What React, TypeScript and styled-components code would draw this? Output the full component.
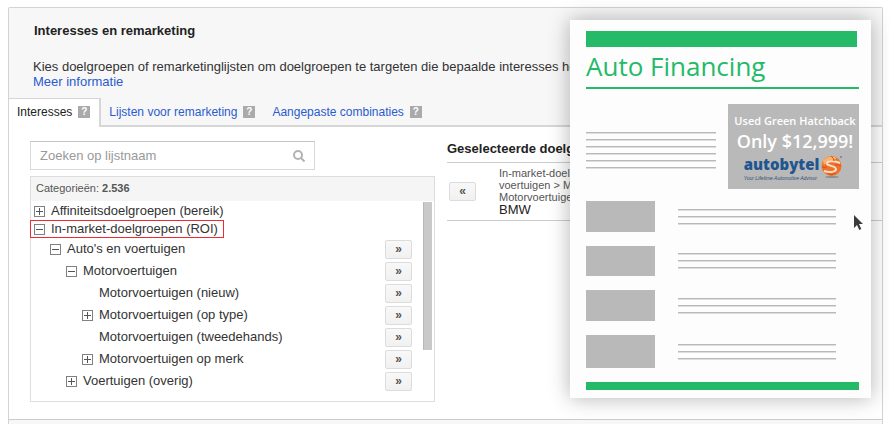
import React from "react";
import styled, { createGlobalStyle } from "styled-components";

const GlobalStyle = createGlobalStyle`
  * { box-sizing: border-box; }
  body {
    margin: 0;
    background: #fff;
    color: #333;
    font-family: "Liberation Sans", Arial, sans-serif;
    font-size: 13px;
    line-height: 16px;
  }
  button, input { font-family: inherit; }
  h2, h3, p, ul { margin: 0; padding: 0; }
  ul { list-style: none; }
`;

const Page = styled.main`
  position: relative;
  padding: 7px 6px 0 8px;
  overflow: hidden;
`;

const Panel = styled.section`
  border: 1px solid #d3d3d3;
  border-bottom-color: #ccc;
  border-radius: 2px 2px 0 0;
  background: #fff;
`;

const NextPanel = styled.div`
  height: 5px;
  border: solid #d3d3d3;
  border-width: 0 1px;
  background: #f7f7f7;
`;

const Header = styled.header`
  padding: 15px 0 0;
  background: #f7f7f7;
`;

const Title = styled.h2`
  padding: 0 25px;
  color: #222;
  font-size: 13px;
  line-height: 16px;
`;

const Intro = styled.p`
  padding: 20px 0 9px 24px;
  line-height: 15px;
  white-space: nowrap;
  overflow: hidden;
`;

const Link = styled.a`
  color: #2a5bd0;
  text-decoration: none;
`;

const Tabs = styled.div`
  display: flex;
  height: 29px;
`;

const TabCell = styled.div<{ $active?: boolean }>`
  display: flex;
  align-items: center;
  gap: 6px;
  padding: 0 9px ${(p) => (p.$active ? 2 : 0)}px 8px;
  border: solid #d6d6d6;
  border-width: ${(p) => (p.$active ? "1px 2px 0 0" : "0 0 2px")};
  background: ${(p) => (p.$active ? "#fff" : "transparent")};
`;

const TabButton = styled.button<{ $active?: boolean }>`
  padding: 0;
  border: 0;
  background: none;
  color: ${(p) => (p.$active ? "#222" : "#2a5bd0")};
  font-size: 12px;
  line-height: 16px;
  white-space: nowrap;
`;

const TabRule = styled.div`
  flex: 1;
  border-bottom: 2px solid #d6d6d6;
`;

const Help = styled.button`
  width: 12px;
  height: 12px;
  padding: 0;
  border: 0;
  background: #aaa;
  color: #fff;
  font-size: 10px;
  font-weight: bold;
  line-height: 12px;
`;

const Content = styled.div`
  display: flex;
  align-items: flex-start;
  gap: 12px;
  padding: 14px 0 17px 21px;
`;

const Browser = styled.div`
  flex: none;
  width: 405px;
`;

const SearchBox = styled.label`
  display: flex;
  align-items: center;
  width: 285px;
  height: 29px;
  padding: 0 9px;
  border: 1px solid #d9d9d9;
  border-top-color: #c4c4c4;
`;

const SearchInput = styled.input`
  flex: 1;
  min-width: 0;
  padding: 0;
  border: 0;
  outline: 0;
  font-size: 13px;
  &::placeholder { color: #999; opacity: 1; }
`;

const TreeBox = styled.div`
  margin-top: 6px;
  border: 1px solid #ddd;
`;

const Count = styled.div`
  height: 24px;
  padding-left: 5px;
  background: #f5f5f5;
  color: #555;
  font-size: 11px;
  line-height: 23px;
`;

const TreeBody = styled.div`
  display: flex;
  padding: 1px 2px 9px 0;
`;

const Tree = styled.ul`
  flex: 1;
`;

const Thumb = styled.div`
  width: 9px;
  height: 148px;
  border-left: 1px solid #b8b8b8;
  background: #c9c9c9;
`;

const Row = styled.li<{ $level: number }>`
  display: flex;
  align-items: center;
  justify-content: space-between;
  height: ${(p) => (p.$level ? 22 : 18)}px;
  padding: 0 11px 0 ${(p) => p.$level * 16}px;
`;

const Node = styled.span<{ $marked?: boolean }>`
  display: flex;
  align-items: center;
  gap: 6px;
  height: 18px;
  padding: 0 5px 0 3px;
  border: 1px solid ${(p) => (p.$marked ? "#ee2b34" : "transparent")};
  margin-left: -1px;
  white-space: nowrap;
`;

const Toggle = styled.button`
  display: block;
  width: 11px;
  height: 11px;
  padding: 0;
  border: 0;
  background: none;
  svg { display: block; }
`;

const Blank = styled.span`
  width: 11px;
`;

const MoveButton = styled.button`
  width: 27px;
  height: 19px;
  padding: 0;
  border: 1px solid #dcdcdc;
  border-radius: 2px;
  background: linear-gradient(#f8f8f8, #f1f1f1);
  color: #555;
  font-size: 12px;
  font-weight: bold;
  line-height: 15px;
`;

const Selected = styled.div`
  flex: 1;
  min-width: 0;
`;

const SelectedTitle = styled.h3`
  padding-bottom: 6px;
  border-bottom: 1px solid #ccc;
  color: #222;
  font-size: 13px;
  line-height: 15px;
`;

const SelectedItem = styled.div`
  display: flex;
  align-items: center;
  gap: 23px;
  height: 58px;
  padding-left: 2px;
  border-bottom: 1px solid #ccc;
`;

const Path = styled.div`
  width: 176px;
  color: #555;
  font-size: 11px;
  line-height: 12px;
`;

const Leaf = styled.div`
  color: #222;
  font-size: 13px;
  line-height: 14px;
`;

const Preview = styled.aside`
  position: absolute;
  top: 20px;
  right: 18px;
  width: 301px;
  height: 378px;
  padding: 11px 12px 0 16px;
  background: #fdfdfd;
  box-shadow: 0 0 20px rgba(0, 0, 0, 0.3);
  font-family: "Open Sans", sans-serif;
`;

const Bar = styled.div<{ $h: number; $inset?: number }>`
  height: ${(p) => p.$h}px;
  margin-right: ${(p) => p.$inset ?? 0}px;
  background: #24ba68;
`;

const PreviewTitle = styled.h2`
  height: 40px;
  color: #24ba68;
  font-size: 26px;
  font-weight: 400;
  line-height: 38px;
  white-space: nowrap;
`;

const TopRow = styled.div`
  display: flex;
  justify-content: space-between;
  margin: 15px 0 12px;
`;

const Lines = styled.div<{ $w: number; $top?: number }>`
  display: grid;
  align-content: center;
  gap: 5px;
  width: ${(p) => p.$w}px;
  padding-top: ${(p) => p.$top ?? 0}px;
`;

const Line = styled.div`
  height: 2px;
  border-top: 1px solid #b9b9b9;
  background: #dedede;
`;

const Ad = styled.div`
  display: flex;
  flex-direction: column;
  align-items: center;
  width: 131px;
  height: 85px;
  padding-top: 9px;
  background: #b9b9b9;
  color: #fff;
  font-weight: 600;
  white-space: nowrap;
`;

const AdLine = styled.div<{ $size: number; $lh: number }>`
  padding-left: 3px;
  font-size: ${(p) => p.$size}px;
  line-height: ${(p) => p.$lh}px;
`;

const Brand = styled.div`
  display: flex;
  align-items: center;
  gap: 2px;
  color: #1f568f;
  svg { display: block; }
`;

const BrandName = styled.div`
  font-size: 15px;
  font-weight: 800;
  line-height: 22px;
`;

const Tagline = styled.div`
  color: #2f4d73;
  font-family: "Liberation Sans", sans-serif;
  font-size: 5px;
  font-style: italic;
  font-weight: 400;
  line-height: 6px;
`;

const Articles = styled.div`
  display: grid;
  gap: 14px;
  padding-bottom: 14px;
`;

const Article = styled.div`
  display: flex;
  gap: 23px;
`;

const Picture = styled.div<{ $h: number }>`
  width: 69px;
  height: ${(p) => p.$h}px;
  background: #b9b9b9;
`;

const Pointer = styled.svg`
  position: absolute;
  top: 194px;
  right: 8px;
`;

type TreeNode = {
  label: string;
  level: number;
  state?: "open" | "closed";
  marked?: boolean;
};

const nodes: TreeNode[] = [
  { label: "Affiniteitsdoelgroepen (bereik)", level: 0, state: "closed" },
  { label: "In-market-doelgroepen (ROI)", level: 0, state: "open", marked: true },
  { label: "Auto's en voertuigen", level: 1, state: "open" },
  { label: "Motorvoertuigen", level: 2, state: "open" },
  { label: "Motorvoertuigen (nieuw)", level: 3 },
  { label: "Motorvoertuigen (op type)", level: 3, state: "closed" },
  { label: "Motorvoertuigen (tweedehands)", level: 3 },
  { label: "Motorvoertuigen op merk", level: 3, state: "closed" },
  { label: "Voertuigen (overig)", level: 2, state: "closed" },
];

const tabs = ["Interesses", "Lijsten voor remarketing", "Aangepaste combinaties"];

const pictureHeights = [31, 30, 31, 33];

function ToggleIcon({ open }: { open: boolean }) {
  return (
    <svg width="11" height="11" viewBox="0 0 11 11" fill="none" stroke="#808080">
      <rect x="0.5" y="0.5" width="10" height="10" />
      <path d={open ? "M2 5.5h7" : "M2 5.5h7M5.5 2v7"} stroke="#555" />
    </svg>
  );
}

function SkeletonLines({ count, width, top }: { count: number; width: number; top?: number }) {
  return (
    <Lines $w={width} $top={top}>
      {Array.from({ length: count }, (_, i) => (
        <Line key={i} />
      ))}
    </Lines>
  );
}

function Globe() {
  return (
    <svg width="22" height="24" viewBox="0 0 22 24">
      <ellipse cx="11" cy="22" rx="7" ry="1" fill="#8d8d8d" />
      <circle cx="10.5" cy="11" r="10" fill="#ee7328" />
      <path d="M2 6Q6 0 14 2Q17 4 12 5Q6 6 3 10Z" fill="#f9b26b" />
      <path d="M19 8C13 5 5 6 6 9c1 2 9 2 9 5 0 3-6 4-12 2" fill="none" stroke="#f6ddca" strokeWidth="2" />
      <path d="M1 12Q4 13 6 12M14 10Q17 9 20 11M10 1Q13 3 13 6M7 19Q11 21 15 18" fill="none" stroke="#d65218" />
      <circle cx="20" cy="2" r="1" fill="#69819b" />
    </svg>
  );
}

export default function App() {
  return (
    <Page>
      <GlobalStyle />
      <Panel>
        <Header>
          <Title>Interesses en remarketing</Title>
          <Intro>
            Kies doelgroepen of remarketinglijsten om doelgroepen te targeten die bepaalde interesses hebben.
            <br />
            <Link href="#info">Meer informatie</Link>
          </Intro>
          <Tabs role="tablist">
            {tabs.map((t, i) => (
              <TabCell key={t} $active={i === 0}>
                <TabButton role="tab" aria-selected={i === 0} $active={i === 0}>
                  {t}
                </TabButton>
                <Help aria-label={`Help bij ${t}`}>?</Help>
              </TabCell>
            ))}
            <TabRule />
          </Tabs>
        </Header>
        <Content>
          <Browser>
            <SearchBox>
              <SearchInput type="text" aria-label="Zoeken op lijstnaam" placeholder="Zoeken op lijstnaam" />
              <svg width="12" height="12" viewBox="0 0 12 12" fill="none" stroke="#b3b3b3" strokeWidth="2">
                <circle cx="5" cy="5" r="4" />
                <path d="M8 8l3.5 3.5" />
              </svg>
            </SearchBox>
            <TreeBox>
              <Count>
                Categorieën: <b>2.536</b>
              </Count>
              <TreeBody>
                <Tree>
                  {nodes.map((n) => (
                    <Row key={n.label} $level={n.level}>
                      <Node $marked={n.marked}>
                        {n.state ? (
                          <Toggle aria-label={n.label} aria-expanded={n.state === "open"}>
                            <ToggleIcon open={n.state === "open"} />
                          </Toggle>
                        ) : (
                          <Blank />
                        )}
                        {n.label}
                      </Node>
                      {n.level > 0 && <MoveButton aria-label={`${n.label} toevoegen`}>»</MoveButton>}
                    </Row>
                  ))}
                </Tree>
                <Thumb />
              </TreeBody>
            </TreeBox>
          </Browser>
          <Selected>
            <SelectedTitle>Geselecteerde doelgroepen</SelectedTitle>
            <SelectedItem>
              <MoveButton aria-label="BMW verwijderen">«</MoveButton>
              <div>
                <Path>In-market-doelgroepen &gt; Auto's en voertuigen &gt; Motorvoertuigen &gt; Motorvoertuigen op merk &gt;</Path>
                <Leaf>BMW</Leaf>
              </div>
            </SelectedItem>
          </Selected>
        </Content>
      </Panel>
      <NextPanel />
      <Preview>
        <Bar $h={16} $inset={2} />
        <PreviewTitle>Auto Financing</PreviewTitle>
        <Bar $h={2} />
        <TopRow>
          <SkeletonLines count={6} width={130} top={8} />
          <Ad>
            <AdLine $size={11} $lh={16}>Used Green Hatchback</AdLine>
            <AdLine $size={18} $lh={24}>Only $12,999!</AdLine>
            <Brand>
              <div>
                <BrandName>autobytel</BrandName>
                <Tagline>Your Lifetime Automotive Advisor</Tagline>
              </div>
              <Globe />
            </Brand>
          </Ad>
        </TopRow>
        <Articles>
          {pictureHeights.map((h, i) => (
            <Article key={i}>
              <Picture $h={h} />
              <SkeletonLines count={3} width={158} />
            </Article>
          ))}
        </Articles>
        <Bar $h={8} />
        <Pointer width="10" height="17" viewBox="0 0 10 17">
          <path d="M1 1v13l3-3 2.300 5 2-1-2.300-5H10Z" fill="#3b3b3b" />
        </Pointer>
      </Preview>
    </Page>
  );
}
